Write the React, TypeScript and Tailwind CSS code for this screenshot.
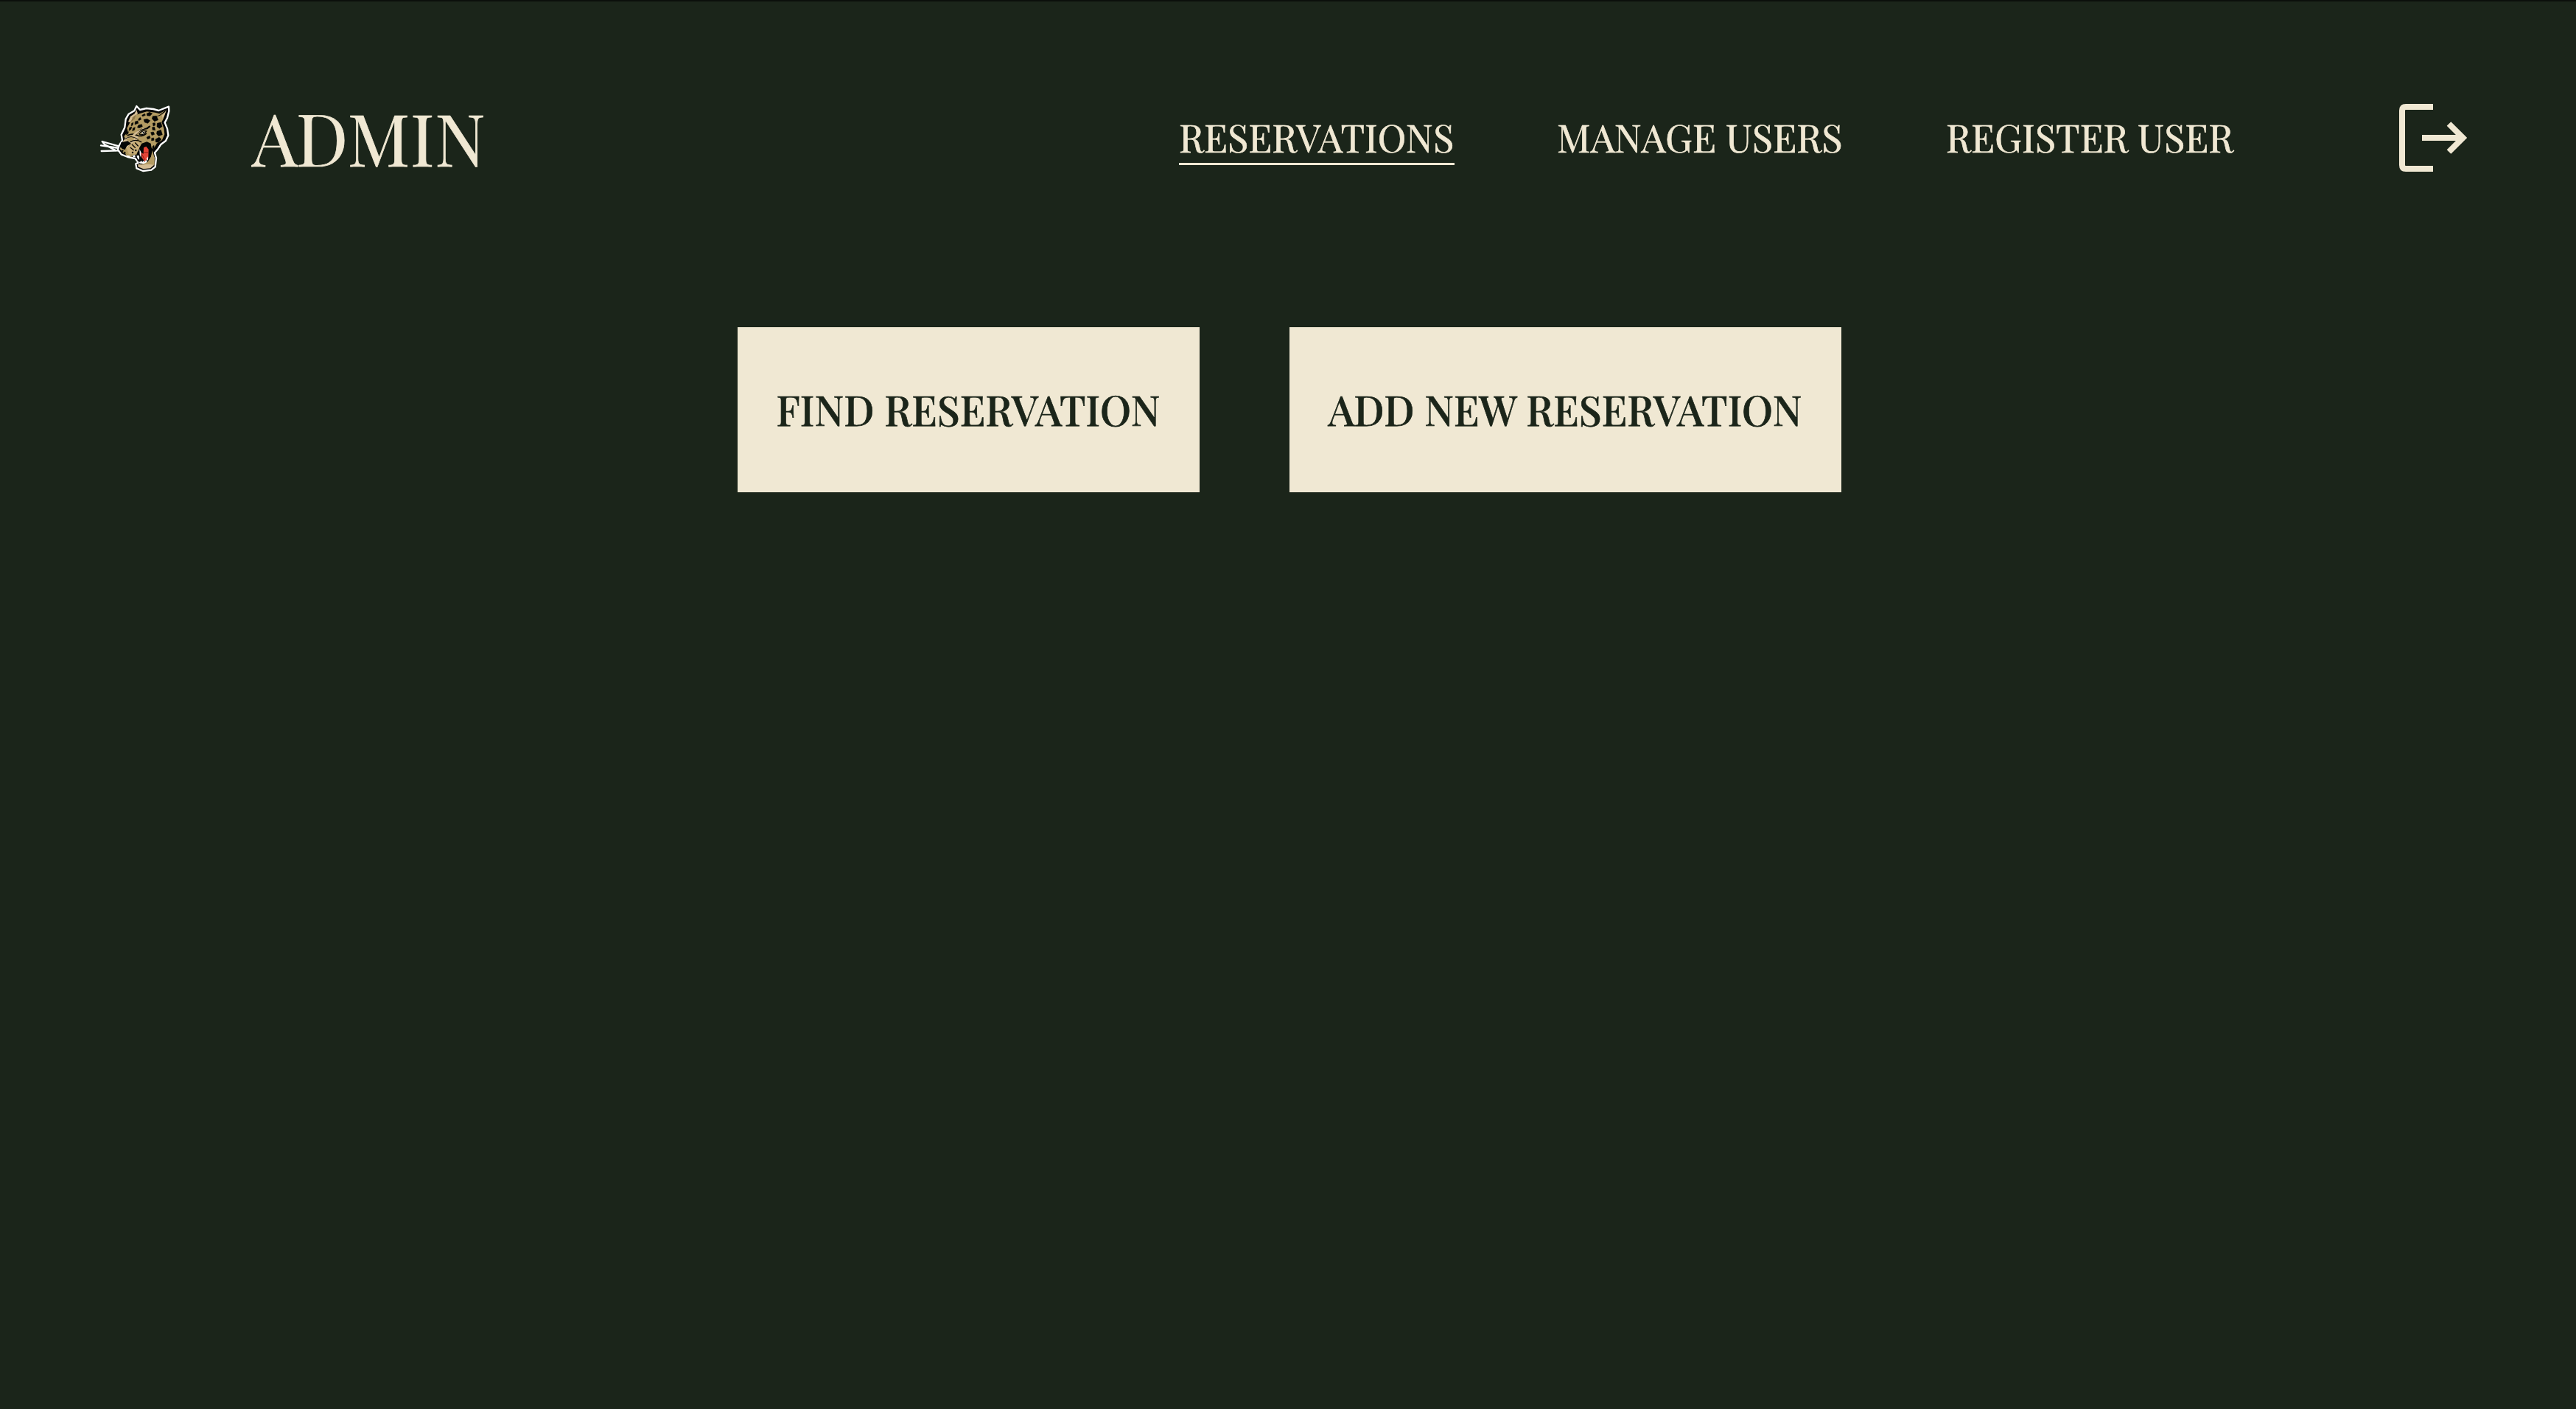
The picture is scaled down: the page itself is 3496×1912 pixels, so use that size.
import React from "react";

const navItems = [
  { label: "RESERVATIONS", box: "w-[374px] mr-[139px] border-[#f0e8d3]" },
  { label: "MANAGE USERS", box: "w-[387px] mr-[141px] border-transparent" },
  { label: "REGISTER USER", box: "w-[391px] border-transparent" },
];

const actions = [
  { label: "FIND RESERVATION", box: "w-[627px]" },
  { label: "ADD NEW RESERVATION", box: "w-[749px]" },
];

function LeopardLogo() {
  return (
    <svg viewBox="0 0 390 360" className="h-[120px] w-[130px] shrink-0" aria-label="Leopard">
      {/* whiskers */}
      <g stroke="#fff" strokeWidth="7" strokeLinecap="round" fill="none">
        <path d="M56 186 L126 206" />
        <path d="M51 202 L124 213" />
        <path d="M53 225 L124 223" />
        <path d="M58 188 L66 198 L110 222" />
      </g>
      {/* white keyline and black outline */}
      <path
        d="M196 42 L210 57 L236 51 L264 54 L286 60 L327 44 L328 62 L321 90 L311 109 L321 134 L325 161 L315 183 L295 198 L284 215 L270 232 L276 254 L272 289 L256 302 L222 306 L196 295 L193 277 L204 272 L190 255 L160 249 L134 239 L120 219 L125 202 L138 181 L134 158 L148 128 L152 95 L164 74 L187 61 Z"
        fill="#050605" stroke="#fff" strokeWidth="7" strokeLinejoin="round"
      />
      {/* fur */}
      <path
        d="M210 72 L238 64 L272 68 L289 73 L316 58 L305 94 L298 107 L307 132 L310 157 L300 180 L278 194 L264 218 L257 213 L254 194 L238 187 L217 194 L204 218 L196 239 L169 242 L142 232 L128 216 L137 195 L150 177 L145 164 L161 147 L157 132 L171 105 L190 79 Z"
        fill="#b39b62"
      />
      <path d="M196 57 L201 73 L182 91 L169 109 L162 106 L171 84 L188 73 Z" fill="#d5bd94" />
      <path d="M180 88 L194 76 L188 94 L174 105 Z" fill="#8f7749" />
      <path d="M318 58 L300 80 L274 94 L300 96 L309 82 Z" fill="#d5bd94" />
      <path d="M299 76 L264 91 L293 109 L302 92 Z" fill="#b39b62" />
      <path d="M319 55 L291 77 L269 87 L291 81 L311 67 Z" fill="#050605" />
      {/* lower jaw */}
      <path d="M259 238 L269 251 L266 283 L252 295 L224 298 L202 289 L202 279 L227 280 L247 268 Z" fill="#d5bd94" />
      <path d="M260 222 L255 248 L239 269 L214 280 L246 279 L269 281 L269 252 Z" fill="#b39b62" />
      {/* muzzle */}
      <path d="M134 196 L150 171 L178 162 L205 166 L195 184 L167 200 L151 217 L135 209 Z" fill="#d5bd94" />
      <path d="M153 177 L175 166 L190 174 L171 190 Z" fill="#b39b62" />
      <path d="M133 190 L160 184 L174 195 L157 204 L149 220 L137 215 L129 207 Z" fill="#050605" />
      <path d="M155 212 L180 194 L204 185 L212 194 L204 222 L191 236 L165 237 Z" fill="#c8ad78" />
      <path d="M150 235 L169 241 L186 242 L172 249 L156 245 Z" fill="#b39b62" />
      <g stroke="#050605" strokeLinecap="round" fill="none">
        <path d="M148 177 Q173 155 202 178" strokeWidth="3" />
        <path d="M171 188 Q193 174 215 188" strokeWidth="4" />
        <path d="M160 161 Q180 151 203 163 Q222 166 235 154" strokeWidth="5" />
        <path d="M197 151 Q211 136 240 132 L249 125" strokeWidth="7" />
        <path d="M207 155 Q219 139 236 144 Q224 161 209 158" strokeWidth="4" />
        <path d="M178 199 L190 211 M191 192 L202 204 M171 211 L184 221" strokeWidth="4" />
      </g>
      <path d="M179 160 L195 146 L221 132 L241 128 L216 137 L200 152 L184 165 Z" fill="#d5bd94" />
      <path d="M215 151 L226 143 L230 150 L222 156 Z" fill="#d8d4c9" />
      <circle cx="224" cy="149" r="3" fill="#050605" />
      {/* open mouth */}
      <path d="M208 214 L226 194 L246 195 L257 213 L254 247 L241 270 L211 278 L199 263 L207 245 Z" fill="#050605" />
      <path d="M225 211 L235 206 L245 218 L244 254 L230 268 L218 253 L213 231 L224 236 Z" fill="#e64335" />
      <path d="M219 239 L229 261 M226 230 L243 231" stroke="#8f2019" strokeWidth="3" />
      <g fill="#fff">
        <path d="M196 244 L207 243 L207 261 L200 255 Z" />
        <path d="M155 242 L164 252 L171 245 Z" />
        <path d="M180 243 L190 241 L191 250 L181 249 Z" />
        <path d="M203 264 L209 270 L216 264 L219 270 L226 263 L228 270 L235 260 L240 270 L225 277 L209 275 Z" />
        <path d="M208 217 L214 229 L214 252 L209 239 Z" />
        <path d="M236 257 L242 247 L243 264 Z" />
      </g>
      {/* spots */}
      <g fill="#050605" stroke="#050605" strokeWidth="1.5">
        <path d="M237 73 L249 67 L260 72 L251 82 L239 81 Z" />
        <path d="M218 79 L229 73 L232 79 L221 84 Z" />
        <path d="M262 83 L277 82 L284 98 L269 104 L259 93 Z" />
        <path d="M225 97 L239 94 L251 101 L242 112 L229 108 Z" />
        <path d="M203 95 L211 88 L215 96 L205 101 Z" />
        <path d="M190 105 L201 102 L203 112 L189 117 Z" />
        <path d="M204 119 L217 116 L220 125 L207 131 L199 128 Z" />
        <path d="M280 112 L295 108 L300 125 L289 133 L279 126 Z" />
        <path d="M262 111 L271 110 L272 120 L264 123 Z" />
        <path d="M260 128 L269 127 L272 140 L261 139 Z" />
        <path d="M279 145 L295 139 L301 158 L286 164 L278 156 Z" />
        <path d="M254 149 L265 147 L269 157 L258 161 Z" />
        <path d="M273 177 L288 169 L297 177 L284 190 L274 188 Z" />
        <path d="M237 169 L249 163 L252 172 L241 177 Z" />
        <path d="M257 173 L266 171 L267 181 L257 183 Z" />
        <path d="M261 206 L267 202 L268 214 L261 219 Z" />
        <path d="M176 112 L183 109 L180 120 L174 122 Z" />
        <path d="M167 130 L177 126 L173 137 L165 142 Z" />
        <path d="M181 132 L190 128 L188 139 L179 143 Z" />
        <path d="M155 151 L163 146 L162 154 L154 159 Z" />
        <circle cx="139" cy="224" r="3" />
        <circle cx="148" cy="231" r="3" />
        <circle cx="180" cy="231" r="3" />
        <circle cx="193" cy="222" r="3" />
      </g>
    </svg>
  );
}

function LogoutIcon() {
  return (
    <svg viewBox="0 0 92 92" className="h-[92px] w-[92px] shrink-0" fill="none" stroke="#f0e8d3" strokeWidth="8">
      <path d="M46 4 H9 Q4 4 4 9 V83 Q4 88 9 88 H46" />
      <path d="M31 46 H85" />
      <path d="M67.5 27 L86.5 46 L67.5 65" />
    </svg>
  );
}

export default function App() {
  return (
    <div className="flex h-[1912px] w-[3496px] flex-col overflow-hidden border-t-2 border-[#0b0f0b] bg-[#1b251a] font-['Playfair_Display','Liberation_Serif',serif] text-[#f0e8d3] [-webkit-text-stroke:0.7px]">
      <header className="flex h-[370px] w-full items-start pl-[120px] pt-[128px]">
        <LeopardLogo />
        <h1 className="ml-[92px] mt-[-4px] h-[120px] w-[320px] whitespace-nowrap text-[97.9px] leading-[120px]">ADMIN</h1>
        <nav className="ml-[938px] mt-[23px] flex">
          {navItems.map((item) => (
            <a key={item.label} className={`block h-[71px] whitespace-nowrap border-b-3 text-[52.5px] leading-[64px] ${item.box}`}>
              {item.label}
            </a>
          ))}
        </nav>
        <button className="ml-[224px] mt-[11px]" aria-label="Log out">
          <LogoutIcon />
        </button>
      </header>
      <main className="flex pl-[1001px] pt-[72px]">
        <div className="flex gap-[122px]">
          {actions.map((action) => (
            <button
              key={action.label}
              className={`flex h-[224px] items-center justify-center whitespace-nowrap bg-[#f0e8d3] pb-[3px] pr-[1px] text-[55.9px] font-medium leading-[70px] text-[#1b251a] ${action.box}`}
            >
              {action.label}
            </button>
          ))}
        </div>
      </main>
    </div>
  );
}
